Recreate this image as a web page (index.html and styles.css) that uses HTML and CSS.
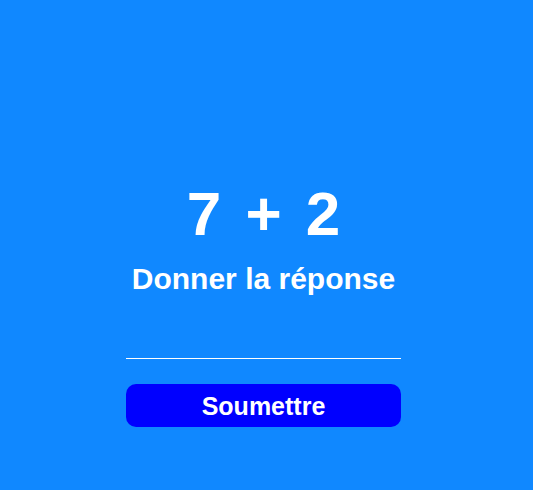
FILE: index.html
```html
<!DOCTYPE html>
<html lang="fr">
<head>
<meta charset="utf-8">
<title>Quiz</title>
<link rel="stylesheet" href="styles.css">
</head>
<body>
<main class="quiz">
  <h1 class="equation">7 + 2</h1>
  <h2 class="prompt">Donner la réponse</h2>
  <form class="answer-form">
    <input class="answer-input" type="text" aria-label="Réponse">
    <button class="submit-btn" type="button">Soumettre</button>
  </form>
</main>
</body>
</html>
```

FILE: styles.css
```css
html, body {
  margin: 0;
  padding: 0;
  height: 100%;
}
body {
  background: #1088ff;
  font-family: "Liberation Sans", Arial, sans-serif;
  color: #fff;
}
.quiz {
  display: flex;
  flex-direction: column;
  align-items: center;
  padding: 179px 6px 0 0;
}
.equation {
  margin: 0;
  font-size: 62px;
  font-weight: bold;
  line-height: 70px;
  word-spacing: 7px;
}
.prompt {
  margin: 13px 0 0;
  font-size: 30px;
  font-weight: bold;
  line-height: 34px;
}
.answer-form {
  display: flex;
  flex-direction: column;
  margin-top: 34px;
  width: 275px;
}
.answer-input {
  height: 29px;
  padding: 0;
  border: none;
  border-bottom: 1px solid #fff;
  background: transparent;
  color: #fff;
  font-size: 20px;
  outline: none;
  box-sizing: border-box;
}
.submit-btn {
  margin-top: 25px;
  height: 43px;
  padding: 2px 0 0;
  border: none;
  border-radius: 10px;
  background: #0000ff;
  color: #fff;
  font-family: "Liberation Sans", Arial, sans-serif;
  font-size: 25px;
  font-weight: bold;
}
```
